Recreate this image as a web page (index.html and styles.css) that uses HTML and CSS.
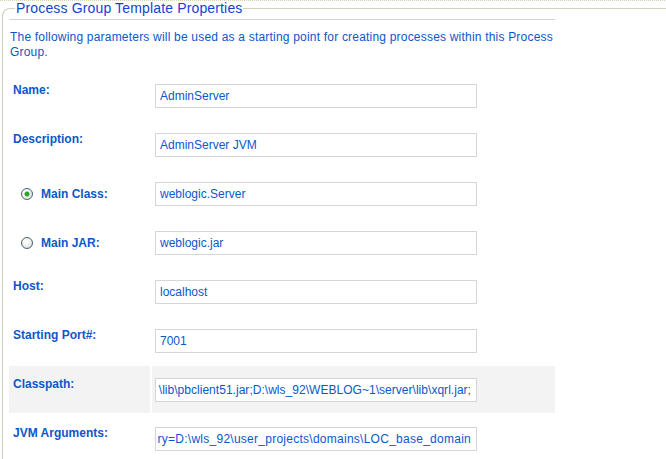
FILE: index.html
```html
<!DOCTYPE html>
<html>
<head>
<meta charset="utf-8">
<link rel="stylesheet" href="styles.css">
</head>
<body>
<fieldset class="panel">
  <legend class="panel-title">Process Group Template Properties</legend>
  <div class="rule"></div>
  <p class="intro">The following parameters will be used as a starting point for creating processes within this Process<br>Group.</p>
  <div class="form">
    <div class="label">Name:</div>
    <div class="cell"><div class="field">AdminServer</div></div>

    <div class="label">Description:</div>
    <div class="cell"><div class="field">AdminServer JVM</div></div>

    <div class="label radio-label"><span class="radio checked"></span>Main Class:</div>
    <div class="cell"><div class="field">weblogic.Server</div></div>

    <div class="label radio-label"><span class="radio"></span>Main JAR:</div>
    <div class="cell"><div class="field">weblogic.jar</div></div>

    <div class="label">Host:</div>
    <div class="cell"><div class="field">localhost</div></div>

    <div class="label">Starting Port#:</div>
    <div class="cell"><div class="field">7001</div></div>

    <div class="label shaded">Classpath:</div>
    <div class="cell shaded"><div class="field tail path"><span>\lib\pbclient51.jar;D:\wls_92\WEBLOG~1\server\lib\xqrl.jar;</span></div></div>

    <div class="label">JVM Arguments:</div>
    <div class="cell"><div class="field tail args"><span>ry=D:\wls_92\user_projects\domains\LOC_base_domain</span></div></div>
  </div>
</fieldset>
</body>
</html>
```

FILE: styles.css
```css
html, body {
  overflow: hidden;
}
body {
  margin: 0;
  background: #ffffff repeating-linear-gradient(90deg, #d2d2bc 0 1px, transparent 1px 2px) top left / 100% 1px no-repeat;
  font-family: "Liberation Sans", Arial, sans-serif;
  font-size: 12px;
  color: #0a58ca;
}
.panel {
  margin: 0 0 0 2px;
  padding: 0 0 0 6px;
  border: 1px solid #d0d0bc;
  border-right: none;
  border-radius: 8px 0 0 0;
  min-height: 520px;
}
.panel-title {
  margin-left: 6px;
  padding: 0 1px;
  font-size: 14px;
  line-height: 16px;
  letter-spacing: 0.15px;
  color: #1343d2;
}
.rule {
  margin-top: 3px;
  width: 546px;
  height: 1px;
  background: #d4d4d4;
}
.intro {
  margin: 10px 0 0 1px;
  line-height: 15px;
  letter-spacing: 0.2px;
  white-space: nowrap;
}
.form {
  margin-top: 12px;
  display: grid;
  grid-template-columns: 141px 403px;
  grid-auto-rows: 47px;
  gap: 2px;
}
.label {
  padding: 11px 0 0 4px;
  font-weight: bold;
  line-height: 14px;
}
.radio-label {
  display: flex;
  align-items: center;
  align-self: start;
  padding: 17px 0 0 12px;
}
.radio {
  box-sizing: border-box;
  width: 12px;
  height: 12px;
  margin-right: 8px;
  border: 1px solid #4a6078;
  border-radius: 50%;
  background: radial-gradient(circle at 40% 35%, #ffffff 0, #f2f2ee 45%, #cfcfc8 100%);
}
.radio.checked {
  background: radial-gradient(circle, #2aa12a 0 2px, #8fd08f 2.5px, transparent 3px),
              radial-gradient(circle at 40% 35%, #ffffff 0, #f2f2ee 45%, #cfcfc8 100%);
}
.cell {
  padding: 12px 0 0 3px;
}
.shaded {
  background: #f3f3f3;
}
.field {
  box-sizing: border-box;
  width: 322px;
  height: 24px;
  border: 1px solid #d6d6d6;
  background: #ffffff;
  padding: 0 5px 0 4px;
  line-height: 22px;
  white-space: nowrap;
  overflow: hidden;
}
.tail {
  display: flex;
  justify-content: flex-end;
}
.tail span {
  flex: none;
}
.path {
  padding-left: 2px;
  letter-spacing: 0.03px;
}
.args {
  letter-spacing: 0.26px;
}
```
